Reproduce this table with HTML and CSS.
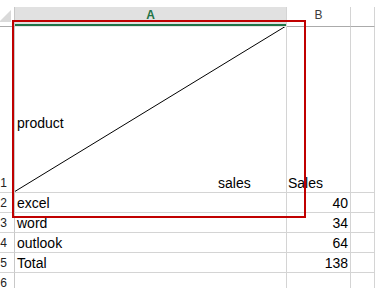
FILE: index.html
```html
<!DOCTYPE html>
<html>
<head>
<meta charset="utf-8">
<link rel="stylesheet" href="styles.css">
</head>
<body>
<div class="sheet">
  <div class="grid">
    <div class="corner"><svg class="corner-tri" width="14" height="19"><polygon points="11,3 11,15 0,15 0,14" fill="#dadada"/></svg></div>
    <div class="colhead sel">A</div>
    <div class="colhead">B</div>
    <div class="colhead"></div>

    <div class="rowhead">1</div>
    <div class="cell diag">
      <svg class="diag-line" preserveAspectRatio="none"><line x1="0" y1="100%" x2="100%" y2="0" stroke="#000" stroke-width="1"/></svg>
      <span class="diag-top">product</span>
      <span class="diag-bottom">sales</span>
    </div>
    <div class="cell b1">Sales</div>
    <div class="cell"></div>

    <div class="rowhead">2</div>
    <div class="cell">excel</div>
    <div class="cell num">40</div>
    <div class="cell"></div>

    <div class="rowhead">3</div>
    <div class="cell">word</div>
    <div class="cell num">34</div>
    <div class="cell"></div>

    <div class="rowhead">4</div>
    <div class="cell">outlook</div>
    <div class="cell num">64</div>
    <div class="cell"></div>

    <div class="rowhead">5</div>
    <div class="cell">Total</div>
    <div class="cell num">138</div>
    <div class="cell"></div>

    <div class="rowhead">6</div>
    <div class="cell"></div>
    <div class="cell"></div>
    <div class="cell"></div>
  </div>
  <div class="selection"></div>
</div>
</body>
</html>
```
FILE: styles.css
```css
html, body {
  margin: 0;
  height: 100%;
  overflow: hidden;
  background: #fff;
}
body {
  font-family: "Liberation Sans", Arial, sans-serif;
}
.sheet {
  position: relative;
  padding-top: 7px;
}
.grid {
  display: grid;
  grid-template-columns: 15px 272px 64px 1fr;
  grid-template-rows: 20px 166px repeat(5, 20px);
}
.grid > div {
  box-sizing: border-box;
  border-right: 1px solid #d4d4d4;
  border-bottom: 1px solid #d4d4d4;
  min-width: 0;
  overflow: hidden;
}
.corner {
  border-right-color: #c8c8c8 !important;
  border-bottom-color: #ababab !important;
}
.corner-tri {
  display: block;
}
.colhead {
  font-size: 12px;
  line-height: 17px;
  text-align: center;
  color: #3c3c3c;
  border-bottom-color: #ababab !important;
}
.colhead.sel {
  background: #e1e1e1;
  color: #217346;
  font-weight: bold;
  box-shadow: inset 0 -2px 0 #217346;
  border-bottom-color: #e6e6e6 !important;
}
.rowhead {
  font-size: 12px;
  line-height: 16px;
  color: #222;
  display: flex;
  align-items: flex-end;
  justify-content: flex-end;
  padding: 0 7px 1px 0;
  border-right-color: #c8c8c8 !important;
}
.cell {
  font-size: 14px;
  line-height: 16px;
  color: #000;
  display: flex;
  align-items: flex-end;
  padding: 0 2px 1px 2px;
  white-space: nowrap;
}
.cell.num {
  justify-content: flex-end;
}
.cell.b1 {
  padding-left: 1px;
}
.cell.diag {
  position: relative;
  flex-direction: column;
  align-items: flex-start;
  justify-content: flex-end;
}
.diag-line {
  position: absolute;
  left: -1px;
  top: -1px;
  width: calc(100% + 1px);
  height: calc(100% + 1px);
  overflow: visible;
}
.diag-top {
  margin-bottom: 44px;
}
.diag-bottom {
  padding-left: 201px;
}
.selection {
  position: absolute;
  left: 12px;
  top: 20px;
  width: 294px;
  height: 198px;
  border: 2px solid #c00000;
  box-sizing: border-box;
  pointer-events: none;
}
```
